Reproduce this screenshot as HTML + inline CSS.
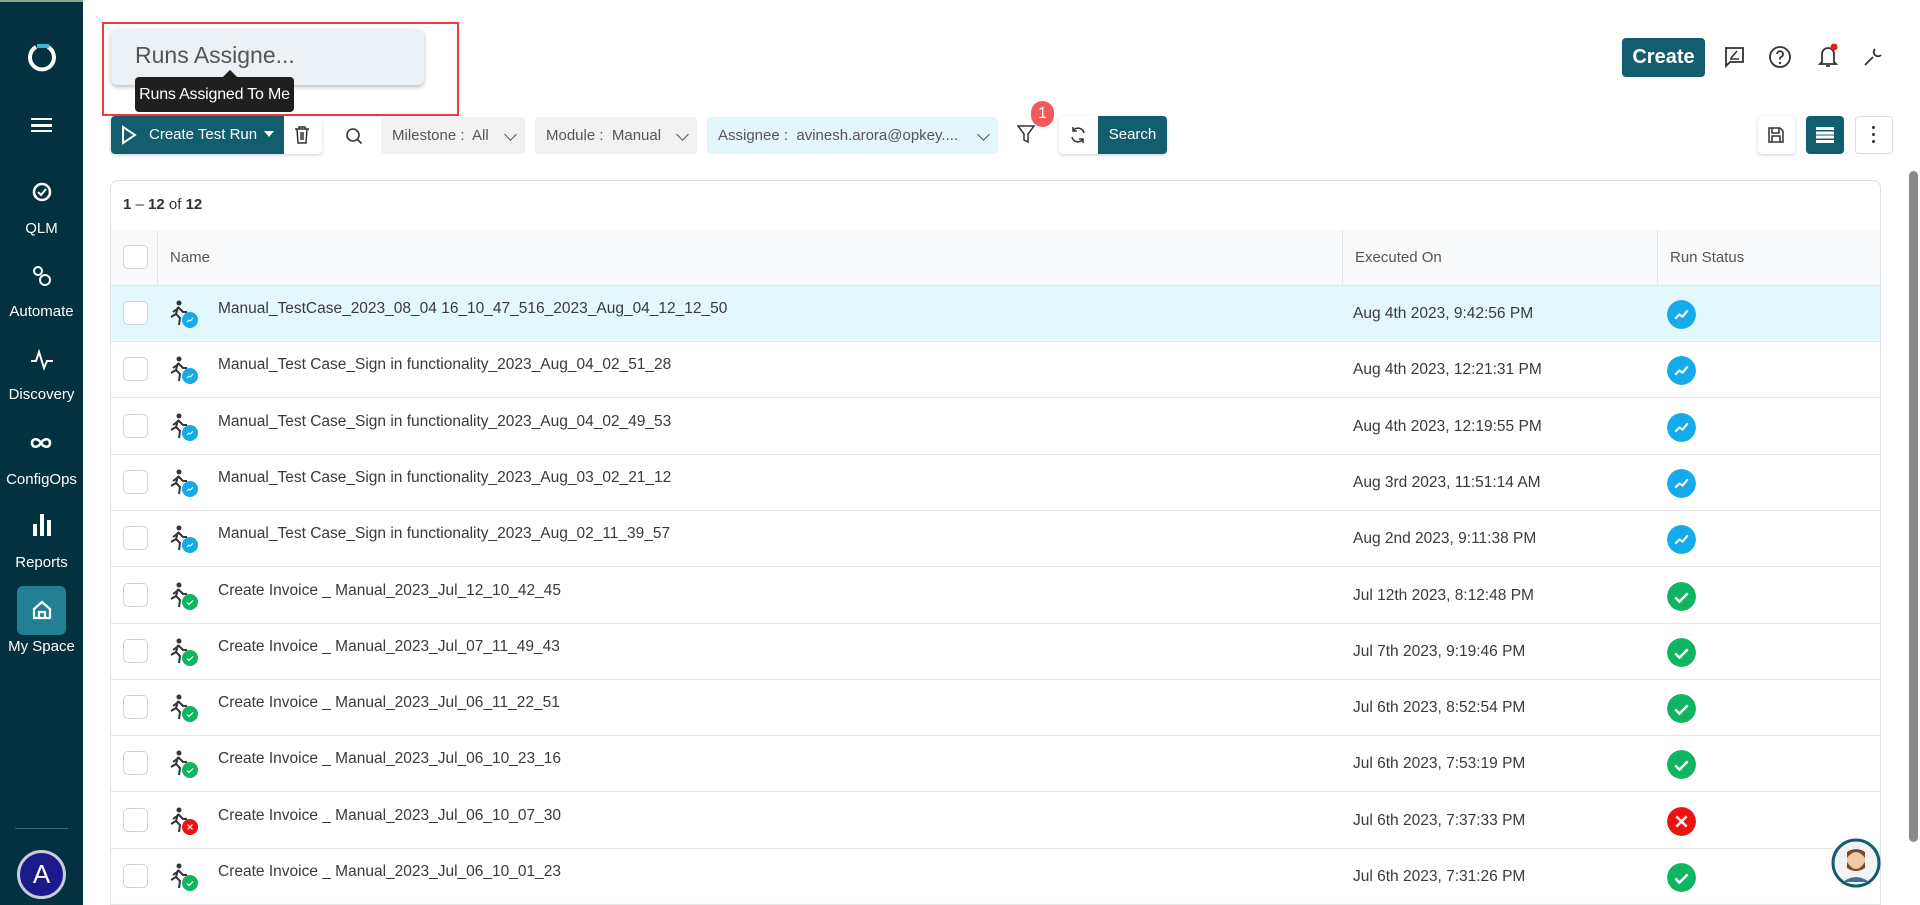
<!DOCTYPE html>
<html style="height:905px;overflow:hidden"><head><meta charset="utf-8"><style>
*{box-sizing:border-box;margin:0;padding:0}
body{width:1920px;height:905px;overflow:hidden;background:#fff;font-family:"Liberation Sans",sans-serif;position:relative;color:#333}
.abs{position:absolute}
#side{left:0;top:0;width:83px;height:905px;background:#04313f;color:#fff;border-top:2px solid #8aa88a}
.si{position:absolute;left:0;width:83px;text-align:center;font-size:15px;color:#fff}
.btn{position:absolute;border-radius:4px}
.chip{position:absolute;top:117px;height:37px;background:#f2f2f2;border-radius:4px;font-size:15px;color:#555;line-height:37px;padding-left:11px;white-space:nowrap}
.chev{position:absolute;right:10px;top:13px;width:9px;height:9px;border-right:1.5px solid #555;border-bottom:1.5px solid #555;transform:rotate(45deg)}
#card{left:110px;top:180px;width:1771px;height:725px;border:1px solid #dde1e6;border-bottom:none;border-radius:8px 8px 0 0;overflow:hidden}
.row{position:absolute;left:0;width:1771px;height:56px;border-bottom:1px solid #e4e6ea;font-size:15.5px;color:#3a3a3a}
.cb{position:absolute;left:12px;width:25px;height:24px;border:1px solid #cfd3d8;border-radius:5px;background:#fff}
.nm{position:absolute;left:107px;top:14px}
.dt{position:absolute;left:1242px;top:19px}
.st{position:absolute;left:1556px;top:14px;width:29px;height:29px;border-radius:50%}
.runner{position:absolute;left:58px;top:13px;width:30px;height:30px}
</style></head><body>
<div id="side" class="abs">
 <svg class="abs" style="left:27px;top:40px" width="30" height="32" viewBox="0 0 30 32"><path d="M9 5 A12 12 0 1 0 21 5" fill="none" stroke="#fff" stroke-width="4"/><path d="M10 4 L22 4" stroke="#3fb5cf" stroke-width="4"/></svg>
 <div class="abs" style="left:31px;top:116px;width:21px;height:14px;border-top:2.5px solid #fff;border-bottom:2.5px solid #fff"></div>
 <div class="abs" style="left:31px;top:122px;width:21px;height:2.5px;background:#fff"></div>
 <svg class="abs" style="left:31px;top:179px" width="22" height="22" viewBox="0 0 22 22"><circle cx="11" cy="11" r="8" fill="none" stroke="#fff" stroke-width="2.5"/><path d="M7 11l3 3 5-6" stroke="#fff" stroke-width="2" fill="none"/></svg>
 <div class="si" style="top:218px">QLM</div>
 <svg class="abs" style="left:30px;top:262px" width="24" height="24" viewBox="0 0 24 24"><circle cx="8" cy="7" r="4" fill="none" stroke="#fff" stroke-width="2"/><circle cx="15" cy="16" r="5" fill="none" stroke="#fff" stroke-width="2"/></svg>
 <div class="si" style="top:301px">Automate</div>
 <svg class="abs" style="left:30px;top:347px" width="24" height="22" viewBox="0 0 24 22"><path d="M1 12h5l3-9 5 16 3-7h6" fill="none" stroke="#fff" stroke-width="2"/></svg>
 <div class="si" style="top:384px">Discovery</div>
 <svg class="abs" style="left:29px;top:432px" width="26" height="18" viewBox="0 0 26 18"><path d="M12 9c-3-5-9-5-9 0s6 5 9 0 9-5 9 0-6 5-9 0" fill="none" stroke="#fff" stroke-width="2.6"/></svg>
 <div class="si" style="top:469px">ConfigOps</div>
 <div class="abs" style="left:33px;top:522px;width:4px;height:12px;background:#fff"></div>
 <div class="abs" style="left:40px;top:512px;width:4px;height:22px;background:#fff"></div>
 <div class="abs" style="left:47px;top:518px;width:4px;height:16px;background:#fff"></div>
 <div class="si" style="top:552px">Reports</div>
 <div class="abs" style="left:17px;top:584px;width:49px;height:49px;background:#237f92;border-radius:6px"></div>
 <svg class="abs" style="left:31px;top:597px" width="22" height="22" viewBox="0 0 22 22"><path d="M3 10L11 3l8 7v9H3z M8 19v-6h6v6" fill="none" stroke="#fff" stroke-width="2.2"/></svg>
 <div class="si" style="top:636px">My Space</div>
 <div class="abs" style="left:15px;top:826px;width:53px;height:1px;background:#3e6a7a"></div>
 <div class="abs" style="left:17px;top:848px;width:49px;height:49px;border-radius:50%;background:#1a1a8c;border:3px solid #c8ccd8;color:#fff;font-size:26px;text-align:center;line-height:43px">A</div>
</div>

<div class="abs" style="left:102px;top:22px;width:357px;height:94px;border:2px solid #ef3b3b"></div>
<div class="abs" style="left:111px;top:29px;width:313px;height:56px;background:#ebf1f4;border-radius:6px;box-shadow:0 2px 4px rgba(0,0,0,.25);font-size:23px;color:#555;padding:13px 0 0 24px">Runs Assigne...</div>
<div class="abs" style="left:225px;top:72px;width:10px;height:10px;background:#1f1f1f;transform:rotate(45deg)"></div>
<div class="abs" style="left:135px;top:77px;width:159px;height:35px;background:#1f1f1f;border-radius:4px;color:#fff;font-size:16px;line-height:35px;text-align:center;white-space:nowrap;letter-spacing:-0.2px">Runs Assigned To Me</div>

<div class="btn" style="left:1622px;top:38px;width:83px;height:39px;background:#135e6e;color:#fff;font-size:20px;line-height:39px;text-align:center;font-weight:bold">Create</div>
<svg class="abs" style="left:1722px;top:45px" width="24" height="24" viewBox="0 0 24 24"><path d="M3 3h18v14H8l-4 4V3z" fill="none" stroke="#333" stroke-width="1.8"/><path d="M8 14h9M9 13l6-7" stroke="#333" stroke-width="1.6"/></svg>
<svg class="abs" style="left:1768px;top:45px" width="24" height="24" viewBox="0 0 24 24"><circle cx="12" cy="12" r="10" fill="none" stroke="#333" stroke-width="1.8"/><path d="M9 9a3 3 0 1 1 4 3c-1 .5-1 1-1 2.5" fill="none" stroke="#333" stroke-width="1.8"/><circle cx="12" cy="18" r="1.2" fill="#333"/></svg>
<svg class="abs" style="left:1816px;top:42px" width="24" height="28" viewBox="0 0 24 28"><path d="M6 20V12a6 6 0 0 1 12 0v8l2 2H4z M10 24h4" fill="none" stroke="#333" stroke-width="1.8"/><circle cx="18" cy="5" r="3.5" fill="#e81c1c"/></svg>
<svg class="abs" style="left:1862px;top:46px" width="22" height="22" viewBox="0 0 22 22"><path d="M3 19l8-8m2-8a4 4 0 1 0 6 6" fill="none" stroke="#333" stroke-width="1.8"/></svg>

<div class="btn" style="left:111px;top:116px;width:211px;height:38px;background:#fff;box-shadow:0 1px 3px rgba(0,0,0,.2)"></div>
<div class="btn" style="left:111px;top:116px;width:173px;height:38px;background:#135e6e;border-radius:4px 0 0 4px;color:#fff;font-size:15px;line-height:38px;padding-left:38px">Create Test Run</div>
<svg class="abs" style="left:121px;top:125px" width="16" height="20" viewBox="0 0 16 20"><path d="M2 2l12 8-12 8z" fill="none" stroke="#fff" stroke-width="2"/></svg>
<div class="abs" style="left:264px;top:131px;border:5px solid transparent;border-top:6px solid #fff"></div>
<svg class="abs" style="left:294px;top:125px" width="16" height="20" viewBox="0 0 16 20"><path d="M1 4h14M5 4V2h6v2M3 4l1 14h8l1-14M7 7v8M9 7v8" fill="none" stroke="#333" stroke-width="1.5"/></svg>
<svg class="abs" style="left:345px;top:127px" width="18" height="18" viewBox="0 0 18 18"><circle cx="8" cy="8" r="6" fill="none" stroke="#333" stroke-width="1.6"/><path d="M12.5 12.5l4 4" stroke="#333" stroke-width="1.6"/></svg>
<div class="chip" style="left:381px;width:144px">Milestone :&nbsp; All<span class="chev"></span></div>
<div class="chip" style="left:535px;width:162px">Module :&nbsp; Manual<span class="chev"></span></div>
<div class="chip" style="left:707px;width:291px;background:#e3f7fb">Assignee :&nbsp; avinesh.arora@opkey....<span class="chev"></span></div>
<svg class="abs" style="left:1017px;top:124px" width="18" height="20" viewBox="0 0 18 20"><path d="M1 2h16l-6 8v8l-4-2v-6z" fill="none" stroke="#333" stroke-width="1.5"/></svg>
<div class="abs" style="left:1031px;top:101px;width:23px;height:26px;border-radius:12px;background:#f05a5a;color:#fff;font-size:16px;text-align:center;line-height:26px">1</div>
<div class="btn" style="left:1059px;top:116px;width:108px;height:38px;background:#fff;box-shadow:0 1px 3px rgba(0,0,0,.2)"></div>
<div class="btn" style="left:1098px;top:116px;width:69px;height:38px;background:#135e6e;border-radius:0 4px 4px 0;color:#fff;font-size:15px;line-height:38px;text-align:center">Search</div>
<svg class="abs" style="left:1069px;top:126px" width="18" height="18" viewBox="0 0 18 18"><path d="M15 7a6 6 0 0 0-11-2M3 11a6 6 0 0 0 11 2M4 1v4h4M14 17v-4h-4" fill="none" stroke="#333" stroke-width="1.5"/></svg>

<div class="btn" style="left:1758px;top:116px;width:37px;height:38px;background:#fff;box-shadow:0 1px 3px rgba(0,0,0,.2)"></div>
<svg class="abs" style="left:1767px;top:126px" width="18" height="18" viewBox="0 0 18 18"><path d="M2 2h11l3 3v11H2z M5 2v5h7V2 M5 16v-6h8v6" fill="none" stroke="#333" stroke-width="1.5"/></svg>
<div class="btn" style="left:1806px;top:116px;width:38px;height:38px;background:#135e6e"></div>
<div class="abs" style="left:1816px;top:127px;width:18px;height:16px;background:repeating-linear-gradient(#fff 0 3px,#135e6e 3px 4.3px)"></div>
<div class="btn" style="left:1855px;top:116px;width:38px;height:38px;background:#fff;border:1px solid #ddd"></div>
<div class="abs" style="left:1872px;top:126px;width:3px;height:3px;background:#333;border-radius:50%;box-shadow:0 7px 0 #333,0 14px 0 #333"></div>

<div class="abs" style="left:1909px;top:171px;width:9px;height:671px;background:#8a8a8a;border-radius:5px"></div>

<div id="card" class="abs">
 <div class="abs" style="left:12px;top:15px;font-size:15px;color:#333"><b>1</b> – <b>12</b> of <b>12</b></div>
 <div class="abs" style="left:0;top:49px;width:1771px;height:56px;background:#f8f9fa;border-bottom:1px solid #e0e3e7;font-size:15px;color:#555">
  <div class="cb" style="top:15px"></div>
  <div class="abs" style="left:46px;top:0;width:1px;height:56px;background:#e4e6ea"></div>
  <div class="abs" style="left:59px;top:19px">Name</div>
  <div class="abs" style="left:1231px;top:0;width:1px;height:56px;background:#e4e6ea"></div>
  <div class="abs" style="left:1244px;top:19px">Executed On</div>
  <div class="abs" style="left:1546px;top:0;width:1px;height:56px;background:#e4e6ea"></div>
  <div class="abs" style="left:1559px;top:19px">Run Status</div>
 </div>
 <div id="rows"></div>
</div>
<svg class="abs" style="left:1831px;top:838px" width="50" height="50" viewBox="0 0 50 50"><circle cx="25" cy="25" r="23" fill="#f3f3f3" stroke="#135e6e" stroke-width="3"/><circle cx="25" cy="22" r="9" fill="#f1c9a5"/><path d="M16 20q9-12 18 0v-6q-9-6-18 0z" fill="#7a4a2a"/><path d="M16 24q9 14 18 0v6q-9 6-18 0z" fill="#7a4a2a"/><path d="M12 44q13-10 26 0" fill="#3d6e9c"/></svg>

<script>
var rows=[
["Manual_TestCase_2023_08_04 16_10_47_516_2023_Aug_04_12_12_50","Aug 4th 2023, 9:42:56 PM","b"],
["Manual_Test Case_Sign in functionality_2023_Aug_04_02_51_28","Aug 4th 2023, 12:21:31 PM","b"],
["Manual_Test Case_Sign in functionality_2023_Aug_04_02_49_53","Aug 4th 2023, 12:19:55 PM","b"],
["Manual_Test Case_Sign in functionality_2023_Aug_03_02_21_12","Aug 3rd 2023, 11:51:14 AM","b"],
["Manual_Test Case_Sign in functionality_2023_Aug_02_11_39_57","Aug 2nd 2023, 9:11:38 PM","b"],
["Create Invoice _ Manual_2023_Jul_12_10_42_45","Jul 12th 2023, 8:12:48 PM","g"],
["Create Invoice _ Manual_2023_Jul_07_11_49_43","Jul 7th 2023, 9:19:46 PM","g"],
["Create Invoice _ Manual_2023_Jul_06_11_22_51","Jul 6th 2023, 8:52:54 PM","g"],
["Create Invoice _ Manual_2023_Jul_06_10_23_16","Jul 6th 2023, 7:53:19 PM","g"],
["Create Invoice _ Manual_2023_Jul_06_10_07_30","Jul 6th 2023, 7:37:33 PM","r"],
["Create Invoice _ Manual_2023_Jul_06_10_01_23","Jul 6th 2023, 7:31:26 PM","g"]];
var col={b:"#15aaea",g:"#10b562",r:"#ee1111"};
var glyph={b:'<path d="M8 18l4-4 3 2 5-6" stroke="#fff" stroke-width="2" fill="none"/>',g:'<path d="M8 15l4 4 8-8" stroke="#fff" stroke-width="2.4" fill="none"/>',r:'<path d="M9 9l10 10M19 9L9 19" stroke="#fff" stroke-width="2.4"/>'};
var h="";
rows.forEach(function(r,i){
 var top=105+i*56.3;
 h+='<div class="row" style="top:'+top+'px;'+(i==0?'background:#e3f8fc;':'')+'">'+
 '<div class="cb" style="top:15px"></div>'+
 '<svg class="runner" viewBox="0 0 30 30"><circle cx="10" cy="4" r="2.5" fill="#333"/><path d="M9 8l-2 7 4 4-1 7M9 8l5 5h4M8 10l-4 3M7 15l-5 3" stroke="#333" stroke-width="2" fill="none"/><circle cx="21" cy="21" r="8" fill="'+col[r[2]]+'"/><g transform="translate(14,14) scale(.5)">'+glyph[r[2]]+'</g></svg>'+
 '<div class="nm">'+r[0]+'</div><div class="dt">'+r[1]+'</div>'+
 '<svg class="st" viewBox="0 0 28 28"><circle cx="14" cy="14" r="14" fill="'+col[r[2]]+'"/>'+glyph[r[2]]+'</svg></div>';
});
document.getElementById("rows").innerHTML=h;
</script>
</body></html>
